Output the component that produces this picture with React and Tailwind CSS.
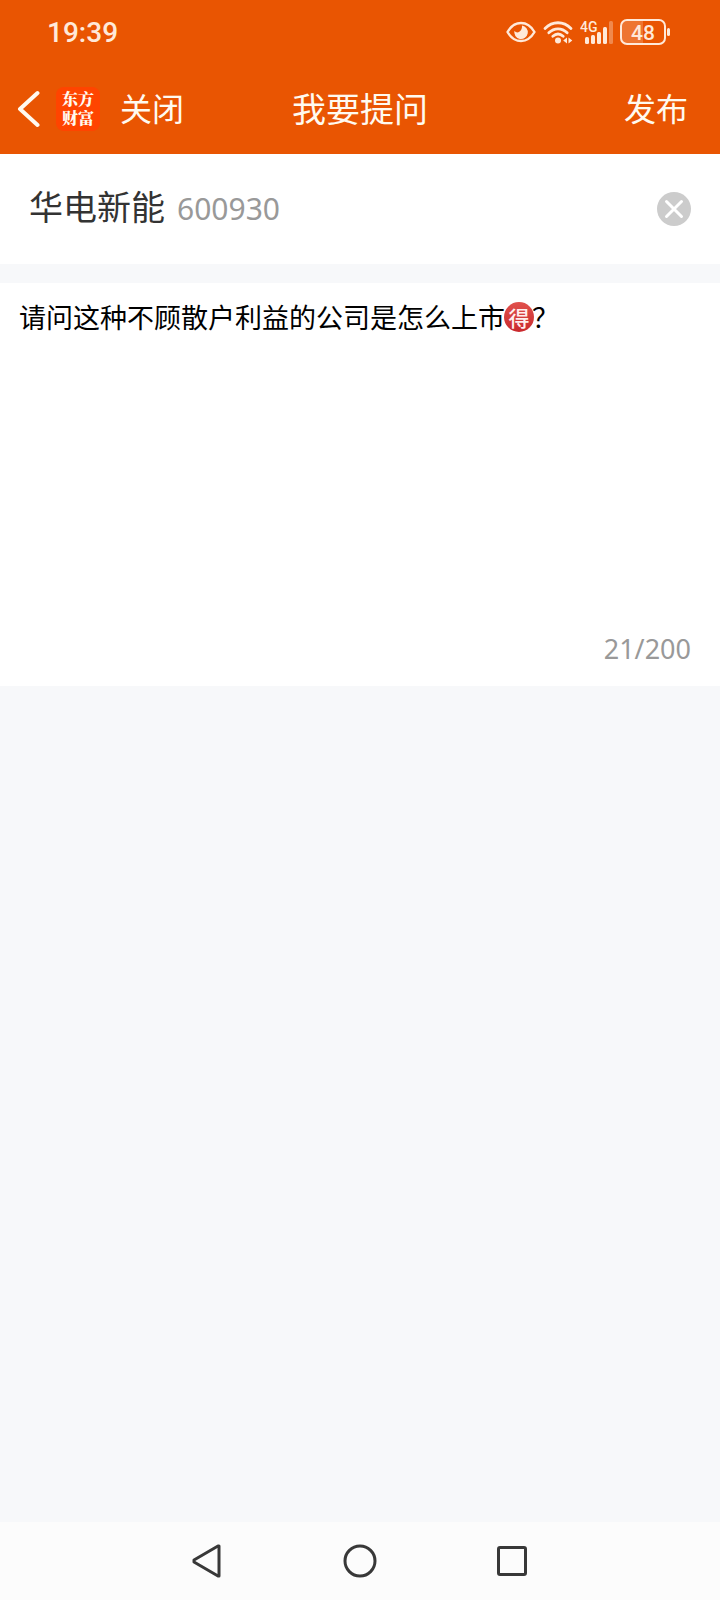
import { useState } from "react";

const MAX_LENGTH = 200;

function EyeIcon() {
    return (
        <svg viewBox="0 0 30 22" className="h-[22px] w-[30px]" fill="none" aria-hidden="true">
            <path d="M1.5 11C5 5 9.5 2 15 2s10 3 13.500 9C25 17 20.500 20 15 20S5 17 1.500 11Z" stroke="currentColor" strokeWidth="2.400" strokeLinejoin="round" />
            <path d="M16 4.500a6.800 6.800 0 1 1-7.600 5.300c1.300 1.600 3 2 4.600 1.200 2.400-1.200 3.200-3.900 3-6.500Z" fill="currentColor" />
        </svg>
    );
}

function WifiIcon() {
    return (
        <svg viewBox="0 0 30 24" className="h-6 w-[30px]" fill="none" aria-hidden="true">
            <g stroke="currentColor" strokeWidth="2.800" strokeLinecap="round">
                <path d="M2 8.500C9.500 0.800 20.500 0.800 28 8.500" />
                <path d="M5.800 12.800c5.500-5.300 12.900-5.300 18.400 0" />
                <path d="M9.800 16.300c3.200-2.800 7.200-2.800 10.400 0" />
            </g>
            <circle cx="15" cy="20.500" r="3" fill="currentColor" />
            <path d="m24 17.500v6l-3.800-3ZM25.500 17.500v6l3.800-3Z" fill="currentColor" />
        </svg>
    );
}

function SignalIcon() {
    return (
        <svg viewBox="0 0 33 24" className="h-6 w-[33px]" aria-hidden="true">
            <text x="0" y="12" fill="currentColor" fontFamily="Roboto, sans-serif" fontSize="14" fontWeight="500">4G</text>
            <g fill="currentColor">
                <rect x="5" y="17" width="4" height="7" rx="1.500" />
                <rect x="11" y="15" width="4" height="9" rx="1.500" />
                <rect x="17" y="12" width="4" height="12" rx="1.500" />
                <rect x="23" y="7" width="4" height="17" rx="1.500" />
                <rect x="29" y="1" width="4" height="23" rx="1.500" opacity="0.350" />
            </g>
        </svg>
    );
}

function BatteryIcon() {
    return (
        <svg viewBox="0 0 51 26" className="h-[26px] w-[51px]" aria-hidden="true">
            <path d="M7 1h16v24H7a6 6 0 0 1-6-6V7a6 6 0 0 1 6-6Z" fill="currentColor" opacity="0.220" />
            <rect x="1" y="1" width="44" height="24" rx="6" fill="none" stroke="currentColor" strokeWidth="2" />
            <rect x="47" y="9" width="3" height="8" rx="1.500" fill="currentColor" />
            <text x="23" y="21" textAnchor="middle" fill="currentColor" fontFamily="Roboto, sans-serif" fontSize="21" fontWeight="500">48</text>
        </svg>
    );
}

function StatusBar() {
    return (
        <div className="flex h-16 items-center justify-between pl-[47px] pr-[49px] text-[#ffe9d9]">
            <span className="pt-0.5 font-[Roboto,sans-serif] text-[28px] font-medium leading-8">19:39</span>
            <div className="flex items-center gap-[7px]">
                <EyeIcon />
                <WifiIcon />
                <SignalIcon />
                <BatteryIcon />
            </div>
        </div>
    );
}

function TitleBar() {
    return (
        <div className="grid h-[90px] grid-cols-[1fr_auto_1fr] items-center px-4 text-[#fffaf0]">
            <div className="flex items-center">
                <button type="button" aria-label="返回">
                    <svg viewBox="0 0 24 38" className="h-[38px] w-6" fill="none" aria-hidden="true">
                        <path d="M21.500 3 4 19l17.500 16" stroke="currentColor" strokeWidth="4" strokeLinecap="round" strokeLinejoin="round" />
                    </svg>
                </button>
                <div className="ml-4 flex h-11 w-11 items-center justify-center rounded-lg bg-[#ff4400]">
                    <span className="block w-8 break-all pb-0.5 font-['Noto_Serif_CJK_SC','Noto_Sans_CJK_SC',serif] text-base font-black leading-[19px]">东方财富</span>
                </div>
                <button type="button" className="ml-5 pb-1 text-[32px] leading-10">关闭</button>
            </div>
            <h1 className="pb-0.5 text-[34px] leading-10">我要提问</h1>
            <button type="button" className="mr-4 justify-self-end pb-1 text-[32px] leading-10">发布</button>
        </div>
    );
}

function StockRow({ name, code, onClear }) {
    return (
        <div className="flex h-[110px] items-center justify-between bg-white pl-[29px] pr-7">
            <div className="flex items-baseline gap-3 pb-1">
                <span className="text-[34px] leading-10 text-[#333333]">{name}</span>
                <span className="font-['Noto_Sans',sans-serif] text-[30px] leading-10 text-[#999999]">{code}</span>
            </div>
            <button type="button" aria-label="清除" onClick={onClear}>
                <svg viewBox="0 0 36 36" className="h-9 w-9" aria-hidden="true">
                    <circle cx="18" cy="18" r="17" fill="#cccccc" />
                    <path d="m10.500 10.500 15 15m0-15-15 15" stroke="#ffffff" strokeWidth="3" strokeLinecap="round" />
                </svg>
            </button>
        </div>
    );
}

// Coloured face for the 🉐 character, laid over the plain glyph in the text box
function EmojiBadge() {
    return (
        <span
            aria-hidden="true"
            className="pointer-events-none absolute left-[485px] top-[5px] flex h-[30px] w-[30px] items-center justify-center rounded-full bg-linear-to-b from-[#e0504c] to-[#c9282d] text-[21px] font-medium leading-none text-[#ffeeee]"
        >
            得
        </span>
    );
}

function NavigationBar() {
    return (
        <nav className="flex h-[78px] items-center justify-center gap-[118px] bg-[#fcfcfc] text-[#383838]">
            <button type="button" aria-label="后退">
                <svg viewBox="0 0 34 34" className="h-[34px] w-[34px]" fill="none" stroke="currentColor" strokeWidth="3" strokeLinejoin="round" aria-hidden="true">
                    <path d="M28 2v30h-1L3 18v-2L27 2Z" />
                </svg>
            </button>
            <button type="button" aria-label="主页">
                <svg viewBox="0 0 34 34" className="h-[34px] w-[34px]" fill="none" stroke="currentColor" strokeWidth="3" aria-hidden="true">
                    <circle cx="17" cy="17" r="15" />
                </svg>
            </button>
            <button type="button" aria-label="最近任务">
                <svg viewBox="0 0 34 34" className="h-[34px] w-[34px]" fill="none" stroke="currentColor" strokeWidth="3" aria-hidden="true">
                    <rect x="3.500" y="3.500" width="27" height="27" rx="1.500" />
                </svg>
            </button>
        </nav>
    );
}

export default function App() {
    const [stock, setStock] = useState({ name: "华电新能", code: "600930" });
    const [question, setQuestion] = useState("请问这种不顾散户利益的公司是怎么上市🉐？");

    return (
        <div className="flex min-h-screen flex-col bg-[#f7f8fa] font-['Noto_Sans_CJK_SC',sans-serif]">
            <header className="bg-[#e95502]">
                <StatusBar />
                <TitleBar />
            </header>

            <main className="flex-1">
                <StockRow name={stock.name} code={stock.code} onClear={() => setStock({ name: "", code: "" })} />

                <section className="mt-[19px] bg-white px-[19px] pb-[17px] pt-[14px]">
                    <div className="relative">
                        <textarea
                            aria-label="提问内容"
                            value={question}
                            maxLength={MAX_LENGTH}
                            onChange={(e) => setQuestion(e.target.value)}
                            className="block h-[332px] w-full resize-none text-[27px] leading-10 text-black outline-none"
                        />
                        {question.indexOf("🉐") === 18 && <EmojiBadge />}
                    </div>
                    <p className="pr-2.5 text-right font-['Noto_Sans',sans-serif] text-[27px] leading-10 text-[#999999]">
                        {question.length}/{MAX_LENGTH}
                    </p>
                </section>
            </main>

            <NavigationBar />
        </div>
    );
}
